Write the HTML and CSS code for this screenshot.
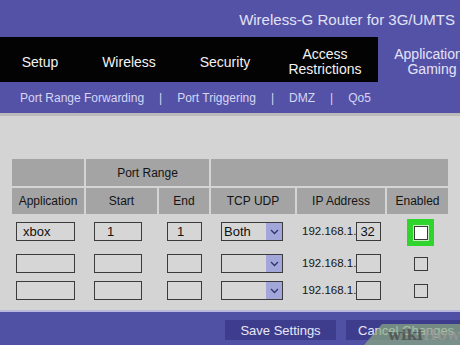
FILE: index.html
```html
<!DOCTYPE html>
<html lang="en">

<head>
    <meta charset="UTF-8">
    <meta name="viewport" content="width=device-width, initial-scale=1.0">
    <title>Applications &amp; Gaming</title>
    <link rel="stylesheet" href="styles.css">
</head>

<body>

    <div class="page">
        <!-- Router title -->
        <header class="topbar">
            <span class="title">Wireless-G Router for 3G/UMTS</span>
        </header>

        <!-- Main tabs -->
        <nav class="mainnav">
            <a class="tab tab-setup">Setup</a>
            <a class="tab tab-wireless">Wireless</a>
            <a class="tab tab-security">Security</a>
            <a class="tab tab-access">Access<br>Restrictions</a>
            <a class="tab tab-apps active">Applications<br>Gaming</a>
        </nav>

        <!-- Sub tabs -->
        <div class="subnav">
            <a>Port Range Forwarding</a><span class="sep">|</span>
            <a>Port Triggering</a><span class="sep">|</span>
            <a>DMZ</a><span class="sep">|</span>
            <a>Qo5</a>
        </div>

        <main class="content">
            <table class="ports">
                <colgroup>
                    <col class="c-app">
                    <col class="c-start">
                    <col class="c-end">
                    <col class="c-proto">
                    <col class="c-ip">
                    <col class="c-on">
                </colgroup>
                <thead>
                    <tr class="head-top">
                        <th></th>
                        <th colspan="2">Port Range</th>
                        <th colspan="3"></th>
                    </tr>
                    <tr class="head-sub">
                        <th>Application</th>
                        <th>Start</th>
                        <th>End</th>
                        <th>TCP UDP</th>
                        <th>IP Address</th>
                        <th>Enabled</th>
                    </tr>
                </thead>
                <tbody>
                    <tr>
                        <td><input class="field f-app" type="text" value="xbox"></td>
                        <td><input class="field f-start" type="text" value="1"></td>
                        <td><input class="field f-end" type="text" value="1"></td>
                        <td><div class="select"><span class="select-val">Both</span><span class="select-arrow"><svg width="9" height="6" viewBox="0 0 9 6"><path d="M1 1 L4.5 4.5 L8 1" fill="none" stroke="#2c3474" stroke-width="1.3"/></svg></span></div></td>
                        <td><span class="ip">192.168.1.</span><input class="field f-oct" type="text" value="32"></td>
                        <td><span class="hl"><span class="check on"></span></span></td>
                    </tr>
                    <tr>
                        <td><input class="field f-app" type="text"></td>
                        <td><input class="field f-start" type="text"></td>
                        <td><input class="field f-end" type="text"></td>
                        <td><div class="select"><span class="select-val"></span><span class="select-arrow"><svg width="9" height="6" viewBox="0 0 9 6"><path d="M1 1 L4.5 4.5 L8 1" fill="none" stroke="#2c3474" stroke-width="1.3"/></svg></span></div></td>
                        <td><span class="ip">192.168.1.</span><input class="field f-oct" type="text"></td>
                        <td><span class="check"></span></td>
                    </tr>
                    <tr>
                        <td><input class="field f-app" type="text"></td>
                        <td><input class="field f-start" type="text"></td>
                        <td><input class="field f-end" type="text"></td>
                        <td><div class="select"><span class="select-val"></span><span class="select-arrow"><svg width="9" height="6" viewBox="0 0 9 6"><path d="M1 1 L4.5 4.5 L8 1" fill="none" stroke="#2c3474" stroke-width="1.3"/></svg></span></div></td>
                        <td><span class="ip">192.168.1.</span><input class="field f-oct" type="text"></td>
                        <td><span class="check"></span></td>
                    </tr>
                </tbody>
            </table>
        </main>

        <footer class="actions">
            <button class="btn btn-save">Save Settings</button>
            <button class="btn btn-cancel">Cancel Changes</button>
        </footer>

        <!-- watermark in the corner -->
        <div class="watermark"><span class="wm-wiki">wiki</span><span class="wm-how">How</span></div>
    </div>

</body>

</html>
```

FILE: styles.css
```css
* {
    box-sizing: border-box;
    font-family: 'Liberation Sans', Arial, sans-serif;
}

body {
    margin: 0;
    padding: 0;
    background: #d4d4d4;
    overflow: hidden;
}

.page {
    position: relative;
    width: 460px;
    height: 345px;
    overflow: hidden;
}

/* Title bar */
.topbar {
    height: 37px;
    background: #5452a7;
    display: flex;
    align-items: center;
    justify-content: flex-end;
    padding: 1px 5px 0 0;
}

.title {
    color: #e2e2f6;
    font-size: 15px;
}

/* Main tabs */
.mainnav {
    height: 45px;
    background: #030303;
    display: flex;
    overflow: hidden;
}

.tab {
    flex: none;
    display: flex;
    align-items: center;
    justify-content: center;
    text-align: center;
    color: #f2f2f2;
    font-size: 14px;
    line-height: 15px;
    padding-top: 5px;
}

.tab-setup { width: 80px; }
.tab-wireless { width: 98px; }
.tab-security { width: 94px; }
.tab-access { width: 106px; }
.tab-apps { width: 108px; }

.tab.active {
    background: #5452a7;
    color: #e4e4f8;
}

/* Sub tabs */
.subnav {
    height: 31px;
    background: #5452a7;
    display: flex;
    align-items: center;
    padding: 1px 0 0 20px;
    color: #d6d6f4;
    font-size: 12px;
}

.subnav .sep {
    margin: 0 15px;
}

/* Gray content */
.content {
    border-top: 3px solid #bababa;
    border-bottom: 2px solid #b9b8dc;
    background: #d4d4d4;
    padding: 41px 0 8px 10px;
}

.ports {
    border-collapse: separate;
    border-spacing: 2px;
    table-layout: fixed;
    width: 440px;
}

.c-app { width: 72px; }
.c-start { width: 71px; }
.c-end { width: 50px; }
.c-proto { width: 84px; }
.c-ip { width: 88px; }
.c-on { width: 61px; }

.ports th {
    background: #a4a4a4;
    color: #141414;
    font-size: 12px;
    font-weight: normal;
    padding: 0;
}

.head-top th {
    height: 27px;
}

.head-sub th {
    height: 26px;
}

.ports td {
    height: 25px;
    padding: 6px 0 0;
    vertical-align: top;
    white-space: nowrap;
}

.field {
    display: inline-block;
    height: 19px;
    border: 1px solid #3b3b3b;
    background: #d6d6d6;
    color: #111;
    font-size: 13px;
    padding: 0;
    margin: 0;
    vertical-align: top;
    outline: none;
}

.f-app { width: 59px; margin-left: 4px; padding-left: 6px; }
.f-start { width: 48px; margin-left: 8px; padding-left: 12px; }
.f-end { width: 35px; margin-left: 8px; padding-left: 9px; }
.f-oct { width: 25px; padding-left: 3px; }

.select {
    display: flex;
    width: 62px;
    height: 19px;
    margin-left: 10px;
    border: 1px solid #3b3b3b;
    background: #d6d6d6;
}

.select-val {
    flex: 1;
    font-size: 13px;
    line-height: 17px;
    padding-left: 2px;
    color: #111;
}

.select-arrow {
    width: 16px;
    background: #a3a6d8;
    display: flex;
    align-items: center;
    justify-content: center;
}

.ip {
    display: inline-block;
    margin-left: 5px;
    font-size: 11.5px;
    line-height: 19px;
    color: #151515;
    vertical-align: top;
}

.check {
    display: block;
    width: 14px;
    height: 14px;
    margin: 3px 0 0 27px;
    border: 1px solid #3a3a3a;
    background: #d6d6d6;
}

.check.on {
    margin: 0;
    background: #fff;
}

/* green highlight round the first box */
.hl {
    display: flex;
    align-items: center;
    justify-content: center;
    width: 27px;
    height: 27px;
    margin: -3px 0 0 20px;
    background: #2fd52c;
    padding: 5px;
}

.hl .check {
    box-shadow: 0 0 0 1px #c6f0c2;
}

/* Bottom bar */
.actions {
    height: 38px;
    background: #5050a4;
    display: flex;
    gap: 10px;
    padding: 8px 0 0 225px;
}

.btn {
    flex: none;
    height: 20px;
    border: none;
    background: #3e3d8d;
    color: #e8e8f8;
    font-size: 13px;
    padding: 0;
    cursor: pointer;
}

.btn-save { width: 111px; }
.btn-cancel { width: 124px; text-align: left; padding-left: 12px; }

.watermark {
    position: absolute;
    right: 0;
    bottom: 0;
    width: 96px;
    height: 21px;
    background: rgba(140, 172, 128, 0.7);
    clip-path: polygon(18px 0, 100% 0, 100% 100%, 0 100%);
    padding: 3px 0 0 24px;
    font-family: 'DejaVu Serif', 'Liberation Serif', serif;
    font-weight: bold;
    font-size: 15px;
    line-height: 16px;
    white-space: nowrap;
}

.wm-wiki {
    font-family: inherit;
    color: rgba(80, 80, 80, 0.85);
}

.wm-how {
    font-family: inherit;
    color: rgba(150, 150, 150, 0.85);
}
```
